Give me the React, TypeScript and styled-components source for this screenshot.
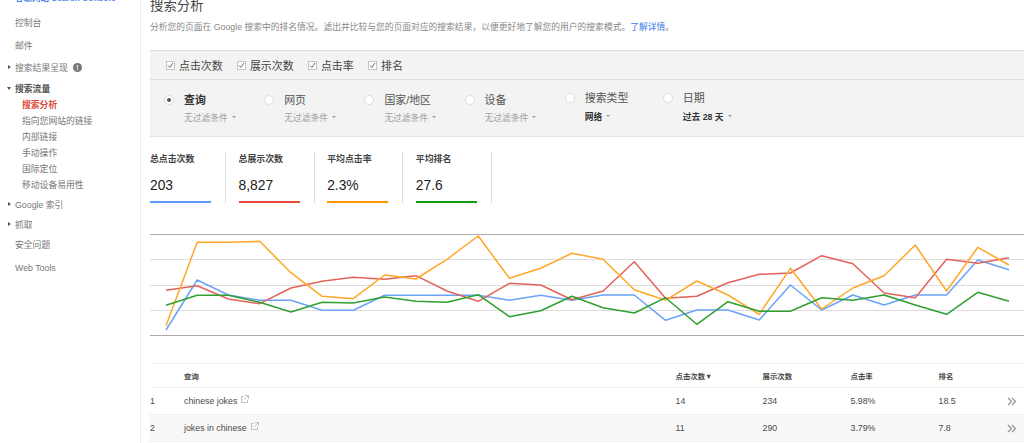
import React from 'react';
import styled, { createGlobalStyle } from 'styled-components';

const FONT = '"Liberation Sans", "Noto Sans CJK SC", sans-serif';

const Global = createGlobalStyle`
  html, body { margin: 0; padding: 0; background: #fff; }
  body { font-family: ${FONT}; }
`;

const Page = styled.div`
  display: flex;
  width: 1024px;
  height: 443px;
  overflow: hidden;
  background: #fff;
`;

const Sidebar = styled.nav`
  flex: 0 0 140px;
  height: 443px;
  border-right: 1px solid #ececec;
  display: flex;
  flex-direction: column;
  font-size: 8.8px;
  color: #777;
  & > * { flex: none; }
`;

const Brand = styled.div`
  display: flex;
  align-items: center;
  height: 16px;
  margin-top: -11px;
  padding-left: 5px;
  gap: 6px;
  color: #4a86ea;
  font-size: 8.5px;
  font-weight: 700;
  white-space: nowrap;
`;

const BrandMark = styled.span`
  width: 4px;
  height: 5px;
  background: #333;
`;

const Item = styled.div<{ $gap: number; $sub?: boolean; $bold?: boolean; $active?: boolean }>`
  display: flex;
  align-items: center;
  height: 16px;
  margin-top: ${p => p.$gap}px;
  padding-left: ${p => (p.$sub ? 22 : 15)}px;
  position: relative;
  white-space: nowrap;
  font-weight: ${p => (p.$bold || p.$active ? 700 : 400)};
  color: ${p => (p.$active ? '#dd4b39' : p.$bold ? '#555' : '#777')};
`;

const Caret = styled.span<{ $open?: boolean }>`
  position: absolute;
  left: ${p => (p.$open ? 6.5 : 8)}px;
  top: ${p => (p.$open ? 7 : 6)}px;
  width: 0;
  height: 0;
  border-style: solid;
  border-color: transparent;
  ${p =>
    p.$open
      ? 'border-width: 3px 2.5px 0 2.5px; border-top-color: #555;'
      : 'border-width: 2.5px 0 2.5px 3px; border-left-color: #555;'}
`;

const InfoDot = styled.span`
  width: 9px;
  height: 9px;
  margin-left: 5px;
  border-radius: 50%;
  background: #777;
  color: #fff;
  font-size: 7px;
  font-weight: 700;
  line-height: 9px;
  text-align: center;
`;

const Main = styled.main`
  flex: 1;
  min-width: 0;
  padding-left: 9px;
  display: flex;
  flex-direction: column;
  & > * { flex: none; }
`;

const Title = styled.h1`
  margin: -2px 0 0;
  height: 16px;
  font-size: 13.4px;
  line-height: 16px;
  font-weight: 400;
  color: #444;
`;

const Description = styled.p`
  margin: 6px 0 0;
  height: 14px;
  font-size: 8.78px;
  line-height: 14px;
  color: #888;
  white-space: nowrap;
`;

const MoreLink = styled.a`
  color: #3b78e7;
`;

const FilterPanel = styled.section`
  margin-top: 16px;
  height: 85px;
  background: #f3f3f3;
  border-top: 1px solid #dedede;
  border-bottom: 1px solid #e4e4e4;
`;

const MetricToggles = styled.div`
  height: 28px;
  padding-left: 16px;
  display: flex;
  align-items: center;
  border-bottom: 1px solid #dcdcdc;
  gap: 14.4px;
`;

const Toggle = styled.label`
  display: flex;
  align-items: center;
  gap: 4px;
  font-size: 10.9px;
  color: #444;
  white-space: nowrap;
`;

const CheckBox = styled.svg`
  width: 9px;
  height: 9px;
  flex: none;
`;

const Dimensions = styled.div`
  display: flex;
  padding-left: 14px;
`;

const Dimension = styled.div<{ $w: number; $tight?: boolean }>`
  flex: 0 0 ${p => p.$w}px;
  display: flex;
  gap: 10px;
  padding-top: ${p => (p.$tight ? 11 : 13)}px;
`;

const Radio = styled.span<{ $on?: boolean }>`
  flex: none;
  width: 10px;
  height: 10px;
  margin-top: 2px;
  border-radius: 50%;
  background: #fff;
  border: 1px solid #ddd;
  box-sizing: border-box;
  display: flex;
  align-items: center;
  justify-content: center;
  &::after {
    content: '';
    display: ${p => (p.$on ? 'block' : 'none')};
    width: 4px;
    height: 4px;
    border-radius: 50%;
    background: #555;
  }
`;

const DimText = styled.div`
  display: flex;
  flex-direction: column;
`;

const DimLabel = styled.div<{ $on?: boolean }>`
  height: 15px;
  line-height: 15px;
  font-size: 10.9px;
  font-weight: ${p => (p.$on ? 700 : 400)};
  color: ${p => (p.$on ? '#333' : '#555')};
  white-space: nowrap;
`;

const DimFilter = styled.div<{ $strong?: boolean; $gap: number }>`
  display: flex;
  align-items: center;
  gap: 4px;
  margin-top: ${p => p.$gap}px;
  height: 12px;
  font-size: 8.75px;
  font-weight: ${p => (p.$strong ? 700 : 400)};
  color: ${p => (p.$strong ? '#333' : '#a0a0a0')};
  white-space: nowrap;
  &::after {
    content: '';
    width: 0;
    height: 0;
    border-style: solid;
    border-color: #999 transparent transparent;
    border-width: 2.5px 2.5px 0;
  }
`;

const Metrics = styled.div`
  display: flex;
  margin-top: 15px;
  height: 52px;
`;

const Metric = styled.div`
  flex: 0 0 88.6px;
  display: flex;
`;

const MetricBody = styled.div`
  width: 61px;
  height: 51px;
  display: flex;
  flex-direction: column;
`;

const MetricName = styled.div`
  height: 14px;
  line-height: 14px;
  font-size: 8.9px;
  font-weight: 700;
  color: #444;
  white-space: nowrap;
`;

const MetricValue = styled.div`
  margin-top: 11px;
  height: 18px;
  line-height: 18px;
  font-size: 13.8px;
  color: #222;
`;

const MetricBar = styled.div<{ $color: string }>`
  margin-top: auto;
  height: 2px;
  background: ${p => p.$color};
`;

const MetricRule = styled.span`
  width: 1px;
  height: 51px;
  margin-left: 14px;
  background: #ddd;
`;

const ChartBox = styled.div`
  margin-top: 26px;
  height: 112px;
`;

const ChartSvg = styled.svg`
  display: block;
  width: 875px;
  height: 112px;
`;

const Table = styled.div`
  margin-top: 21px;
  border-top: 1px solid #efefef;
`;

const Row = styled.div<{ $head?: boolean; $alt?: boolean }>`
  display: grid;
  grid-template-columns: 34px 491.5px 87px 88px 88px 69px 1fr;
  align-items: center;
  height: ${p => (p.$head ? 23 : 26)}px;
  border-bottom: 1px solid #f1f1f1;
  background: ${p => (p.$alt ? '#f8f8f8' : '#fff')};
  font-size: ${p => (p.$head ? 7.4 : 8.8)}px;
  font-weight: ${p => (p.$head ? 700 : 400)};
  color: #4a4a4a;
`;

const QueryCell = styled.div`
  display: flex;
  align-items: center;
  gap: 4px;
`;

const ExternalIcon = styled.svg`
  width: 8px;
  height: 8px;
  margin-top: -4px;
  flex: none;
`;

const MoreIcon = styled.svg`
  width: 10px;
  height: 9px;
  display: block;
  margin-left: -1px;
`;

const XS = Array.from({ length: 28 }, (_, i) => 166 + (i * 843) / 27);
const SERIES: { color: string; ys: number[] }[] = [
  { color: '#6aa3f8', ys: [330, 280, 295, 300.3, 300.3, 310.3, 310.3, 295.3, 295.3, 295.3, 295.3, 300.3, 295.3, 300.3, 295, 295, 320.3, 310, 310, 320, 285, 310, 295, 305, 295, 295, 260, 269.7] },
  { color: '#e2635a', ys: [290.3, 285.7, 299, 303.7, 288, 281.3, 277.3, 279.3, 275.7, 291, 301.3, 283.3, 285, 299.7, 291, 261.7, 298.3, 296.3, 282.7, 274.3, 273, 255.7, 263.7, 293, 297.7, 259.3, 263.3, 257.7] },
  { color: '#ffa726', ys: [325.7, 242.3, 242.3, 241.3, 272.7, 296.3, 298.7, 275, 279, 259.3, 236, 278.3, 268.3, 253.3, 259.3, 289.7, 300.3, 281, 295, 314.3, 268.3, 309, 288, 275.7, 245, 291, 247.3, 265] },
  { color: '#2fa02f', ys: [305.3, 295.3, 295.3, 302.3, 312, 302.3, 303, 297, 301.3, 302.3, 294.7, 316.7, 310.7, 296.3, 307.7, 313, 297.7, 324.3, 301.7, 311.3, 311.3, 297.7, 300.3, 295, 305, 314.3, 292.3, 301.3] },
];

const Check = () => (
  <CheckBox viewBox="0 0 9 9">
    <rect x="0.5" y="0.5" width="8" height="8" fill="#fff" stroke="#c4c4c4" />
    <path d="M2 4.5 L3.8 6.5 L7 2" fill="none" stroke="#666" strokeWidth="1" />
  </CheckBox>
);

const External = () => (
  <ExternalIcon viewBox="0 0 8 8">
    <path d="M3 1.5H.5v6h6V5M4 .5h3.5V4M7.5.5L3.5 4.5" fill="none" stroke="#aaa" strokeWidth="0.7" />
  </ExternalIcon>
);

const More = () => (
  <MoreIcon viewBox="0 0 10 9">
    <path d="M1 1l3.5 3.5L1 8M5 1l3.5 3.5L5 8" fill="none" stroke="#999" strokeWidth="1.4" />
  </MoreIcon>
);

const dims = [
  { label: '查询', filter: '无过滤条件', on: true, w: 100.2 },
  { label: '网页', filter: '无过滤条件', w: 100.2 },
  { label: '国家/地区', filter: '无过滤条件', w: 100.2 },
  { label: '设备', filter: '无过滤条件', w: 100.2 },
  { label: '搜索类型', filter: '网络', strong: true, w: 98 },
  { label: '日期', filter: '过去 28 天', strong: true, w: 120 },
];

const metrics = [
  { name: '总点击次数', value: '203', color: '#5b9bff' },
  { name: '总展示次数', value: '8,827', color: '#e8483c' },
  { name: '平均点击率', value: '2.3%', color: '#ff9800' },
  { name: '平均排名', value: '27.6', color: '#109d10' },
];

const rows = [
  { n: 1, q: 'chinese jokes', c: '14', i: '234', r: '5.98%', p: '18.5' },
  { n: 2, q: 'jokes in chinese', c: '11', i: '290', r: '3.79%', p: '7.8' },
];

export default function App() {
  return (
    <Page>
      <Global />
      <Sidebar>
        <Brand>
          <BrandMark />
          <span>谷歌网站 Search Console</span>
        </Brand>
        <Item $gap={9}>控制台</Item>
        <Item $gap={7}>邮件</Item>
        <Item $gap={6}>
          <Caret />
          搜索结果呈现
          <InfoDot>!</InfoDot>
        </Item>
        <Item $gap={5} $bold>
          <Caret $open />
          搜索流量
        </Item>
        <Item $gap={0} $sub $active>搜索分析</Item>
        <Item $gap={0} $sub>指向您网站的链接</Item>
        <Item $gap={0} $sub>内部链接</Item>
        <Item $gap={0} $sub>手动操作</Item>
        <Item $gap={0} $sub>国际定位</Item>
        <Item $gap={0} $sub>移动设备易用性</Item>
        <Item $gap={4}>
          <Caret />
          Google 索引
        </Item>
        <Item $gap={4}>
          <Caret />
          抓取
        </Item>
        <Item $gap={4}>安全问题</Item>
        <Item $gap={8}>Web Tools</Item>
      </Sidebar>
      <Main>
        <Title>搜索分析</Title>
        <Description>
          分析您的页面在 Google 搜索中的排名情况。滤出并比较与您的页面对应的搜索结果，以便更好地了解您的用户的搜索模式。
          <MoreLink>了解详情</MoreLink>。
        </Description>
        <FilterPanel>
          <MetricToggles>
            {['点击次数', '展示次数', '点击率', '排名'].map(t => (
              <Toggle key={t}>
                <Check />
                {t}
              </Toggle>
            ))}
          </MetricToggles>
          <Dimensions>
            {dims.map(d => (
              <Dimension key={d.label} $w={d.w} $tight={d.strong}>
                <Radio $on={d.on} />
                <DimText>
                  <DimLabel $on={d.on}>{d.label}</DimLabel>
                  <DimFilter $strong={d.strong} $gap={d.strong ? 4 : 3}>{d.filter}</DimFilter>
                </DimText>
              </Dimension>
            ))}
          </Dimensions>
        </FilterPanel>
        <Metrics>
          {metrics.map(m => (
            <Metric key={m.name}>
              <MetricBody>
                <MetricName>{m.name}</MetricName>
                <MetricValue>{m.value}</MetricValue>
                <MetricBar $color={m.color} />
              </MetricBody>
              <MetricRule />
            </Metric>
          ))}
        </Metrics>
        <ChartBox>
          <ChartSvg viewBox="150 230 875 112">
            {[234.5, 335.5].map(y => (
              <line key={y} x1="150" x2="1025" y1={y} y2={y} stroke="#aaa" strokeWidth="1" />
            ))}
            {[259.5, 285.5, 310.5].map(y => (
              <line key={y} x1="150" x2="1025" y1={y} y2={y} stroke="#ddd" strokeWidth="1" />
            ))}
            {SERIES.map(s => (
              <polyline
                key={s.color}
                points={s.ys.map((y, i) => `${XS[i].toFixed(1)},${y}`).join(' ')}
                fill="none"
                stroke={s.color}
                strokeWidth="1.5"
                strokeLinejoin="round"
              />
            ))}
          </ChartSvg>
        </ChartBox>
        <Table>
          <Row $head>
            <span />
            <span>查询</span>
            <span>点击次数▼</span>
            <span>展示次数</span>
            <span>点击率</span>
            <span>排名</span>
            <span />
          </Row>
          {rows.map((r, i) => (
            <Row key={r.n} $alt={i === 1}>
              <span>{r.n}</span>
              <QueryCell>
                {r.q}
                <External />
              </QueryCell>
              <span>{r.c}</span>
              <span>{r.i}</span>
              <span>{r.r}</span>
              <span>{r.p}</span>
              <More />
            </Row>
          ))}
        </Table>
      </Main>
    </Page>
  );
}
